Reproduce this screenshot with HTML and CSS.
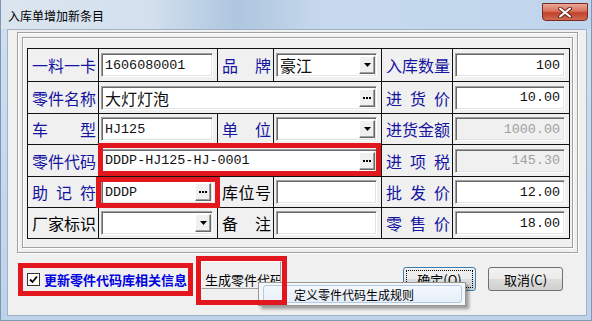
FILE: index.html
```html
<!DOCTYPE html>
<html lang="zh">
<head>
    <meta charset="UTF-8">
    <title>入库单增加新条目</title>
    <link rel="stylesheet" href="styles.css">
</head>
<body>
    <div class="window">
        <div class="titlebar">
            <span class="title">入库单增加新条目</span>
            <div class="close-btn">
                <svg width="14" height="11" viewBox="0 0 14 11">
                    <path d="M2 1.5 L12 9.5 M12 1.5 L2 9.5" stroke="#6b2a20" stroke-width="4" stroke-linecap="round"/>
                    <path d="M2 1.5 L12 9.5 M12 1.5 L2 9.5" stroke="#fff" stroke-width="2" stroke-linecap="round"/>
                </svg>
            </div>
        </div>
        <div class="client">
            <div class="frame-outer">
                <div class="frame-inner">
                    <div class="form-grid">
                        <div class="lbl">一料一卡</div>
                        <div class="cell"><div class="field">1606080001</div></div>
                        <div class="lbl">品牌</div>
                        <div class="cell"><div class="field"><span class="cjk">豪江</span><span class="pick"><svg width="7" height="4"><polygon points="0,0 7,0 3.5,4" fill="#000"/></svg></span></div></div>
                        <div class="lbl">入库数量</div>
                        <div class="cell"><div class="field num">100</div></div>

                        <div class="lbl">零件名称</div>
                        <div class="cell wide"><div class="field"><span class="cjk">大灯灯泡</span><span class="pick"><svg width="8" height="2"><rect x="0" width="2" height="2"/><rect x="3" width="2" height="2"/><rect x="6" width="2" height="2"/></svg></span></div></div>
                        <div class="lbl">进货价</div>
                        <div class="cell"><div class="field num">10.00</div></div>

                        <div class="lbl">车型</div>
                        <div class="cell"><div class="field">HJ125</div></div>
                        <div class="lbl">单位</div>
                        <div class="cell"><div class="field"><span class="pick"><svg width="7" height="4"><polygon points="0,0 7,0 3.5,4" fill="#000"/></svg></span></div></div>
                        <div class="lbl">进货金额</div>
                        <div class="cell"><div class="field num off">1000.00</div></div>

                        <div class="lbl">零件代码</div>
                        <div class="cell wide"><div class="field">DDDP-HJ125-HJ-0001<span class="pick"><svg width="8" height="2"><rect x="0" width="2" height="2"/><rect x="3" width="2" height="2"/><rect x="6" width="2" height="2"/></svg></span></div></div>
                        <div class="lbl">进项税</div>
                        <div class="cell"><div class="field num off">145.30</div></div>

                        <div class="lbl">助记符</div>
                        <div class="cell"><div class="field">DDDP<span class="pick"><svg width="8" height="2"><rect x="0" width="2" height="2"/><rect x="3" width="2" height="2"/><rect x="6" width="2" height="2"/></svg></span></div></div>
                        <div class="lbl plain">库位号</div>
                        <div class="cell"><div class="field"></div></div>
                        <div class="lbl">批发价</div>
                        <div class="cell"><div class="field num">12.00</div></div>

                        <div class="lbl plain">厂家标识</div>
                        <div class="cell"><div class="field"><span class="pick"><svg width="7" height="4"><polygon points="0,0 7,0 3.5,4" fill="#000"/></svg></span></div></div>
                        <div class="lbl plain">备注</div>
                        <div class="cell"><div class="field"></div></div>
                        <div class="lbl">零售价</div>
                        <div class="cell"><div class="field num">18.00</div></div>

                        <div class="mark mark-code"></div>
                        <div class="mark mark-memo"></div>
                    </div>
                </div>
            </div>

            <div class="bottom-bar">
                <div class="check-wrap">
                    <span class="checkbox">
                        <svg width="9" height="9" viewBox="0 0 9 9"><path d="M1 4.5 L3.5 7 L8 1.5" fill="none" stroke="#000" stroke-width="1.8"/></svg>
                    </span>
                    <span class="check-text">更新零件代码库相关信息</span>
                </div>
                <div class="gen-wrap">
                    <button class="btn gen-btn">生成零件代码</button>
                </div>
                <button class="btn ok-btn"><span class="focus">确定(O)</span></button>
                <button class="btn cancel-btn">取消(C)</button>
            </div>

            <div class="popup-menu">
                <div class="menu-item">定义零件代码生成规则</div>
            </div>
        </div>
    </div>
</body>
</html>
```

FILE: styles.css
```css
* {
    margin: 0;
    padding: 0;
    box-sizing: border-box;
}
body {
    width: 592px;
    height: 321px;
    overflow: hidden;
    font-family: "Noto Sans CJK SC", sans-serif;
    background-color: #c4d7eb;
}
.window {
    width: 592px;
    height: 321px;
    display: flex;
    flex-direction: column;
    background: linear-gradient(to bottom, #cfdff0, #bdd3ea);
    border: 1px solid #7f97b0;
    border-top: none;
}
.titlebar {
    height: 29px;
    display: flex;
    justify-content: space-between;
    align-items: flex-start;
    background: linear-gradient(to right, #dbe5ef 0%, #d3e0ee 25%, #aec6df 40%, #c7d9ec 55%, #bfd5ed 100%);
}
.title {
    padding: 7px 0 0 7px;
    font-size: 12px;
    color: #000;
}
.close-btn {
    width: 46px;
    height: 18px;
    margin: 3px 3px 0 0;
    border: 1px solid #7a2c22;
    border-radius: 0 0 4px 4px;
    background: linear-gradient(to bottom, #e9a899 0%, #d9705c 45%, #c2412c 55%, #cf6a52 100%);
    display: flex;
    align-items: center;
    justify-content: center;
}
.client {
    flex: 1;
    position: relative;
    margin: 0 4px 4px 6px;
    background-color: #f0f0f0;
    border: 1px solid #9fb1c4;
}
.frame-outer {
    width: 561px;
    height: 221px;
    margin: 2px 0 0 9px;
    padding: 4px;
    border: 1px solid #a0a0a0;
    box-shadow: inset 1px 1px 0 #fff, 1px 1px 0 #fff;
}
.frame-inner {
    height: 100%;
    padding: 10px 0 0 4px;
    border: 1px solid #a0a0a0;
    box-shadow: inset 1px 1px 0 #fff, 1px 1px 0 #fff;
}
.form-grid {
    position: relative;
    display: grid;
    grid-template-columns: 70px 118px 55px 107px 70px 116px;
    grid-template-rows: 32px 31px 30px 31px 30px 30px;
    gap: 1px;
    width: 543px;
    background-color: #111;
    border: 1px solid #111;
}
.lbl {
    display: grid;
    align-content: center;
    padding: 0 2px 0 4px;
    background-color: #f0f0f0;
    color: #1414a0;
    font-size: 16px;
    line-height: 18px;
    text-align: justify;
    text-align-last: justify;
}
.lbl.plain {
    color: #000;
}
.cell {
    display: flex;
    align-items: center;
    padding: 0 4px 0 2px;
    background-color: #f0f0f0;
}
.cell.wide {
    grid-column: span 3;
}
.field {
    flex: 1;
    height: 24px;
    display: flex;
    align-items: center;
    padding: 0 1px 0 3px;
    background-color: #fff;
    border: 1px solid;
    border-color: #a0a0a0 #fff #fff #a0a0a0;
    box-shadow: inset 1px 1px 0 #696969, inset -1px -1px 0 #e3e3e3;
    font-family: "Liberation Mono", "Noto Sans CJK SC", monospace;
    font-size: 13.4px;
    color: #111;
}
.field.num {
    justify-content: flex-end;
    padding-right: 4px;
}
.field.off {
    background-color: #f0f0f0;
    color: #a0a0a0;
}
.cjk {
    font-family: "Noto Sans CJK SC", sans-serif;
    font-size: 16px;
}
.pick {
    width: 16px;
    height: 18px;
    margin-left: auto;
    display: flex;
    align-items: center;
    justify-content: center;
    background-color: #f0f0f0;
    border: 1px solid;
    border-color: #fff #696969 #696969 #fff;
    box-shadow: inset -1px -1px 0 #a0a0a0;
}
.mark {
    position: absolute;
    border: 5px solid #e3161e;
}
.mark-code {
    left: 70px;
    top: 94px;
    width: 283px;
    height: 33px;
}
.mark-memo {
    left: 68px;
    top: 128px;
    width: 124px;
    height: 31px;
}
.bottom-bar {
    display: flex;
    align-items: flex-start;
    padding-left: 10px;
}
.check-wrap {
    width: 175px;
    height: 33px;
    margin-top: 10px;
    display: flex;
    align-items: center;
    padding-left: 4px;
    border: 5px solid #e3161e;
}
.checkbox {
    width: 13px;
    height: 13px;
    display: flex;
    align-items: center;
    justify-content: center;
    background-color: #fff;
    border: 1px solid #333;
}
.check-text {
    margin-left: 4px;
    font-size: 13px;
    font-weight: bold;
    color: #0000e0;
    white-space: nowrap;
}
.gen-wrap {
    position: relative;
    width: 91px;
    height: 49px;
    margin: 3px 0 0 3px;
    padding: 5px 6px 16px 5px;
}
.gen-wrap::after {
    content: "";
    position: absolute;
    inset: 0;
    z-index: 3;
    border: 5px solid #e3161e;
}
.btn {
    font-family: "Noto Sans CJK SC", sans-serif;
    font-size: 13px;
    color: #000;
    background: linear-gradient(to bottom, #f2f2f2 0%, #ebebeb 50%, #dddddd 51%, #cfcfcf 100%);
    border: 1px solid #707070;
    border-radius: 3px;
}
.gen-btn {
    width: 80px;
    height: 28px;
    padding: 10px 0 0 3px;
    line-height: 16px;
    text-align: left;
    white-space: nowrap;
    overflow: hidden;
    background: #f0f0f0;
    border-radius: 0;
    border-color: #fff #a0a0a0 #a0a0a0 #fff;
}
.ok-btn {
    width: 73px;
    height: 24px;
    margin: 14px 0 0 116px;
    padding: 2px;
    border-color: #3c7fb1;
}
.focus {
    display: block;
    height: 100%;
    line-height: 17px;
    border: 1px dotted #000;
}
.cancel-btn {
    width: 75px;
    height: 24px;
    margin: 14px 0 0 12px;
}
.popup-menu {
    position: absolute;
    left: 250px;
    top: 252px;
    z-index: 2;
    width: 208px;
    height: 24px;
    padding: 2px 3px 2px 4px;
    background: #f5f6f8;
    border: 1px solid #979797;
    box-shadow: 3px 3px 3px rgba(0, 0, 0, 0.35);
}
.menu-item {
    height: 100%;
    padding-left: 30px;
    font-size: 12px;
    line-height: 17px;
    color: #000;
    background: linear-gradient(to bottom, #f4f8fc, #e6eef8);
    border: 1px solid #aecbea;
    border-radius: 3px;
}
```
